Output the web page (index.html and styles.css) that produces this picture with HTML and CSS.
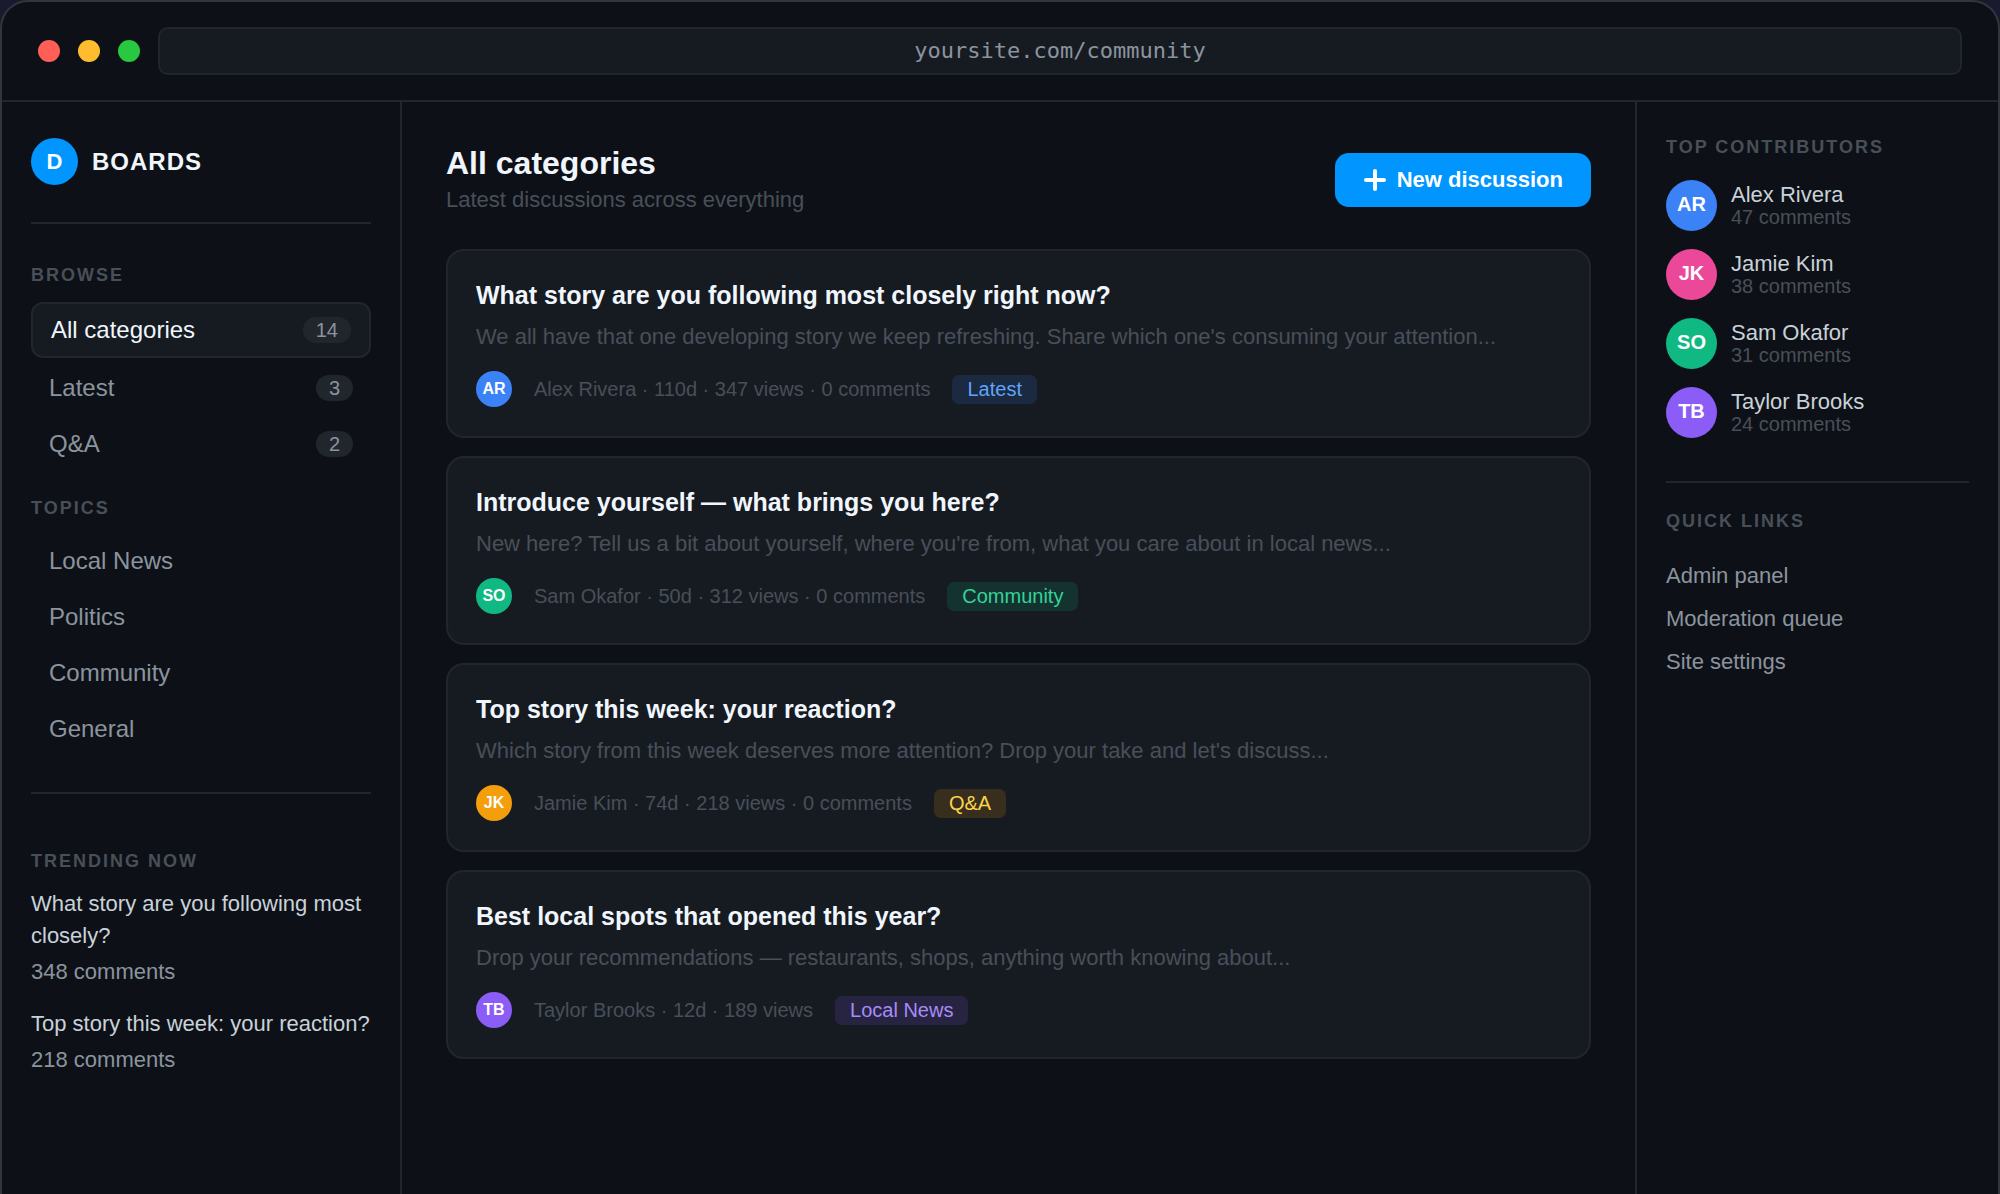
FILE: index.html
```html
<!DOCTYPE html>
<html lang="en">
<head>
	<meta charset="utf-8">
	<title>Boards - All categories</title>
	<link rel="stylesheet" href="styles.css">
</head>
<body>

<div class="window">

	<!-- browser bar -->
	<div class="chrome">
		<span class="dot red"></span>
		<span class="dot yellow"></span>
		<span class="dot green"></span>
		<input class="url" type="text" value="yoursite.com/community" aria-label="Address" readonly>
	</div>

	<div class="layout">

		<aside class="sidebar">
			<div class="brand">
				<span class="logo">D</span>
				<span class="brand-name">BOARDS</span>
			</div>

			<h2 class="label">Browse</h2>
			<nav class="nav">
				<a class="active" href="#all">All categories <span class="count">14</span></a>
				<a href="#latest">Latest <span class="count">3</span></a>
				<a href="#qa">Q&amp;A <span class="count">2</span></a>
			</nav>

			<h2 class="label">Topics</h2>
			<nav class="nav">
				<a href="#local-news">Local News</a>
				<a href="#politics">Politics</a>
				<a href="#community">Community</a>
				<a href="#general">General</a>
			</nav>

			<section class="trending">
				<h2 class="label">Trending now</h2>
				<ul>
					<li>
						<a href="#closely">What story are you following most closely?</a>
						<p>348 comments</p>
					</li>
					<li>
						<a href="#reaction">Top story this week: your reaction?</a>
						<p>218 comments</p>
					</li>
				</ul>
			</section>
		</aside>

		<main class="main">
			<header class="main-head">
				<div>
					<h1>All categories</h1>
					<p>Latest discussions across everything</p>
				</div>
				<button class="new" type="button">
					<svg width="24" height="24" viewBox="0 0 24 24" fill="none" stroke="currentColor" stroke-width="4" stroke-linecap="round" aria-hidden="true"><path d="M12 3v18M3 12h18"/></svg>
					New discussion
				</button>
			</header>

			<div class="threads">
				<article class="card">
					<h3>What story are you following most closely right now?</h3>
					<p>We all have that one developing story we keep refreshing. Share which one's consuming your attention...</p>
					<div class="meta">
						<span class="avatar small blue">AR</span>
						<span>Alex Rivera · 110d · 347 views · 0 comments</span>
						<span class="tag tag-latest">Latest</span>
					</div>
				</article>

				<article class="card">
					<h3>Introduce yourself — what brings you here?</h3>
					<p>New here? Tell us a bit about yourself, where you're from, what you care about in local news...</p>
					<div class="meta">
						<span class="avatar small teal">SO</span>
						<span>Sam Okafor · 50d · 312 views · 0 comments</span>
						<span class="tag tag-community">Community</span>
					</div>
				</article>

				<article class="card">
					<h3>Top story this week: your reaction?</h3>
					<p>Which story from this week deserves more attention? Drop your take and let's discuss...</p>
					<div class="meta">
						<span class="avatar small amber">JK</span>
						<span>Jamie Kim · 74d · 218 views · 0 comments</span>
						<span class="tag tag-qa">Q&amp;A</span>
					</div>
				</article>

				<article class="card">
					<h3>Best local spots that opened this year?</h3>
					<p>Drop your recommendations — restaurants, shops, anything worth knowing about...</p>
					<div class="meta">
						<span class="avatar small purple">TB</span>
						<span>Taylor Brooks · 12d · 189 views</span>
						<span class="tag tag-local">Local News</span>
					</div>
				</article>
			</div>
		</main>

		<aside class="rail">
			<h2 class="label">Top contributors</h2>
			<ul class="people">
				<li>
					<span class="avatar blue">AR</span>
					<div><b>Alex Rivera</b><small>47 comments</small></div>
				</li>
				<li>
					<span class="avatar pink">JK</span>
					<div><b>Jamie Kim</b><small>38 comments</small></div>
				</li>
				<li>
					<span class="avatar teal">SO</span>
					<div><b>Sam Okafor</b><small>31 comments</small></div>
				</li>
				<li>
					<span class="avatar purple">TB</span>
					<div><b>Taylor Brooks</b><small>24 comments</small></div>
				</li>
			</ul>

			<section class="quick">
				<h2 class="label">Quick links</h2>
				<nav>
					<a href="#admin">Admin panel</a>
					<a href="#moderation">Moderation queue</a>
					<a href="#settings">Site settings</a>
				</nav>
			</section>
		</aside>

	</div>
</div>

</body>
</html>
```
FILE: styles.css
```css
:root {
	--bg: #0d1117;
	--panel: #161b22;
	--line: #21262d;
	--edge: #30363d;
	--bright: #f0f6fc;
	--text: #c9d1d9;
	--muted: #8b949e;
	--dim: #484f58;
	--accent: #0095ff;
}

* {
	box-sizing: border-box;
	margin: 0;
	padding: 0;
}
body {
	font-family: "Liberation Sans", Arial, sans-serif;
	font-size: 22px;
	color: var(--text);
	background: #1a1a2e;
}
a {
	color: inherit;
	text-decoration: none;
}
ul {
	list-style: none;
}

.window {
	display: flex;
	flex-direction: column;
	min-height: 100vh;
	background: var(--bg);
	border: 2px solid var(--edge);
	border-bottom: 0;
	border-radius: 28px 28px 0 0;
}

/* browser bar */
.chrome {
	display: flex;
	align-items: center;
	gap: 18px;
	padding: 25px 36px;
	border-bottom: 2px solid var(--line);
}
.dot {
	flex: none;
	width: 22px;
	height: 22px;
	border-radius: 50%;
}
.red {
	background: #ff5f57;
}
.yellow {
	background: #febc2e;
}
.green {
	background: #28c840;
}
.url {
	flex: 1;
	min-width: 0;
	height: 48px;
	padding-bottom: 2px;
	font-family: "DejaVu Sans Mono", monospace;
	font-size: 22px;
	text-align: center;
	color: var(--muted);
	background: var(--panel);
	border: 2px solid var(--line);
	border-radius: 10px;
	outline: none;
}

.layout {
	flex: 1;
	display: grid;
	grid-template-columns: 400px minmax(0, 1fr) 363px;
}

.label {
	margin-bottom: 17px;
	font-size: 18px;
	line-height: 20px;
	letter-spacing: 2px;
	text-transform: uppercase;
	color: var(--dim);
}

/* left column */
.sidebar {
	padding: 36px 29px;
	border-right: 2px solid var(--line);
}
.brand {
	display: flex;
	align-items: center;
	gap: 14px;
	margin-bottom: 41px;
	padding-bottom: 37px;
	border-bottom: 2px solid var(--line);
}
.logo {
	width: 47px;
	height: 47px;
	border-radius: 50%;
	font-weight: bold;
	line-height: 47px;
	text-align: center;
	color: #fff;
	background: var(--accent);
}
.brand-name {
	font-size: 24px;
	font-weight: bold;
	letter-spacing: 1px;
	color: var(--bright);
}
.nav {
	display: flex;
	flex-direction: column;
	gap: 4px;
	margin-bottom: 28px;
}
.nav a {
	display: flex;
	align-items: center;
	justify-content: space-between;
	padding: 12px 18px;
	border-radius: 12px;
	font-size: 24px;
	line-height: 28px;
	color: var(--muted);
}
.nav a.active {
	color: var(--bright);
	background: var(--panel);
	border: 2px solid var(--line);
}
.count {
	padding: 0 13px;
	border-radius: 13px;
	font-size: 20px;
	line-height: 26px;
	color: var(--muted);
	background: var(--line);
}
.trending {
	margin-top: 37px;
	padding-top: 57px;
	border-top: 2px solid var(--line);
}
.trending ul {
	display: grid;
	gap: 20px;
}
.trending li {
	line-height: 32px;
}
.trending p {
	margin-top: 4px;
	color: var(--muted);
}

/* thread list */
.main {
	padding: 44px;
}
.main-head {
	display: flex;
	align-items: center;
	justify-content: space-between;
	margin-bottom: 35px;
}
.main-head h1 {
	margin-bottom: 6px;
	font-size: 32px;
	line-height: 34px;
	color: var(--bright);
}
.main-head p {
	line-height: 28px;
	color: var(--dim);
}
.new {
	display: flex;
	align-items: center;
	gap: 10px;
	height: 54px;
	padding: 0 28px;
	border: 0;
	border-radius: 14px;
	font: bold 22px "Liberation Sans", Arial, sans-serif;
	color: #fff;
	background: var(--accent);
	cursor: pointer;
}
.threads {
	display: grid;
	gap: 18px;
}
.card {
	padding: 28px 28px 29px;
	background: var(--panel);
	border: 2px solid var(--line);
	border-radius: 18px;
}
.card h3 {
	margin-bottom: 10px;
	font-size: 25px;
	line-height: 32px;
	color: var(--bright);
}
.card p {
	margin-bottom: 18px;
	line-height: 32px;
	color: var(--dim);
}
.meta {
	display: flex;
	align-items: center;
	gap: 22px;
	font-size: 20px;
	line-height: 29px;
	color: var(--dim);
}
.tag {
	padding: 0 15px;
	border-radius: 7px;
}
.tag-latest {
	color: #60a5fa;
	background: rgba(59, 130, 246, .15);
}
.tag-community {
	color: #34d399;
	background: rgba(16, 185, 129, .15);
}
.tag-qa {
	color: #fcd34d;
	background: rgba(245, 158, 11, .15);
}
.tag-local {
	color: #a78bfa;
	background: rgba(139, 92, 246, .15);
}

.avatar {
	flex: none;
	width: 51px;
	height: 51px;
	border-radius: 50%;
	font-size: 20px;
	font-weight: bold;
	line-height: 49px;
	text-align: center;
	color: #fff;
}
.avatar.small {
	width: 36px;
	height: 36px;
	font-size: 16px;
	line-height: 36px;
}
.blue {
	background: #3b82f6;
}
.pink {
	background: #ec4899;
}
.teal {
	background: #10b981;
}
.purple {
	background: #8b5cf6;
}
.amber {
	background: #f59e0b;
}

/* right column */
.rail {
	padding: 35px 29px;
	border-left: 2px solid var(--line);
}
.rail .label {
	margin-bottom: 23px;
}
.people {
	display: grid;
	gap: 18px;
}
.people li {
	display: flex;
	align-items: center;
	gap: 14px;
	line-height: 22px;
}
.people b {
	display: block;
	font-weight: normal;
}
.people small {
	display: block;
	font-size: 20px;
	color: var(--dim);
}
.quick {
	margin-top: 43px;
	padding-top: 28px;
	border-top: 2px solid var(--line);
}
.quick a {
	display: block;
	padding: 7px 0;
	line-height: 29px;
	color: var(--muted);
}
```
